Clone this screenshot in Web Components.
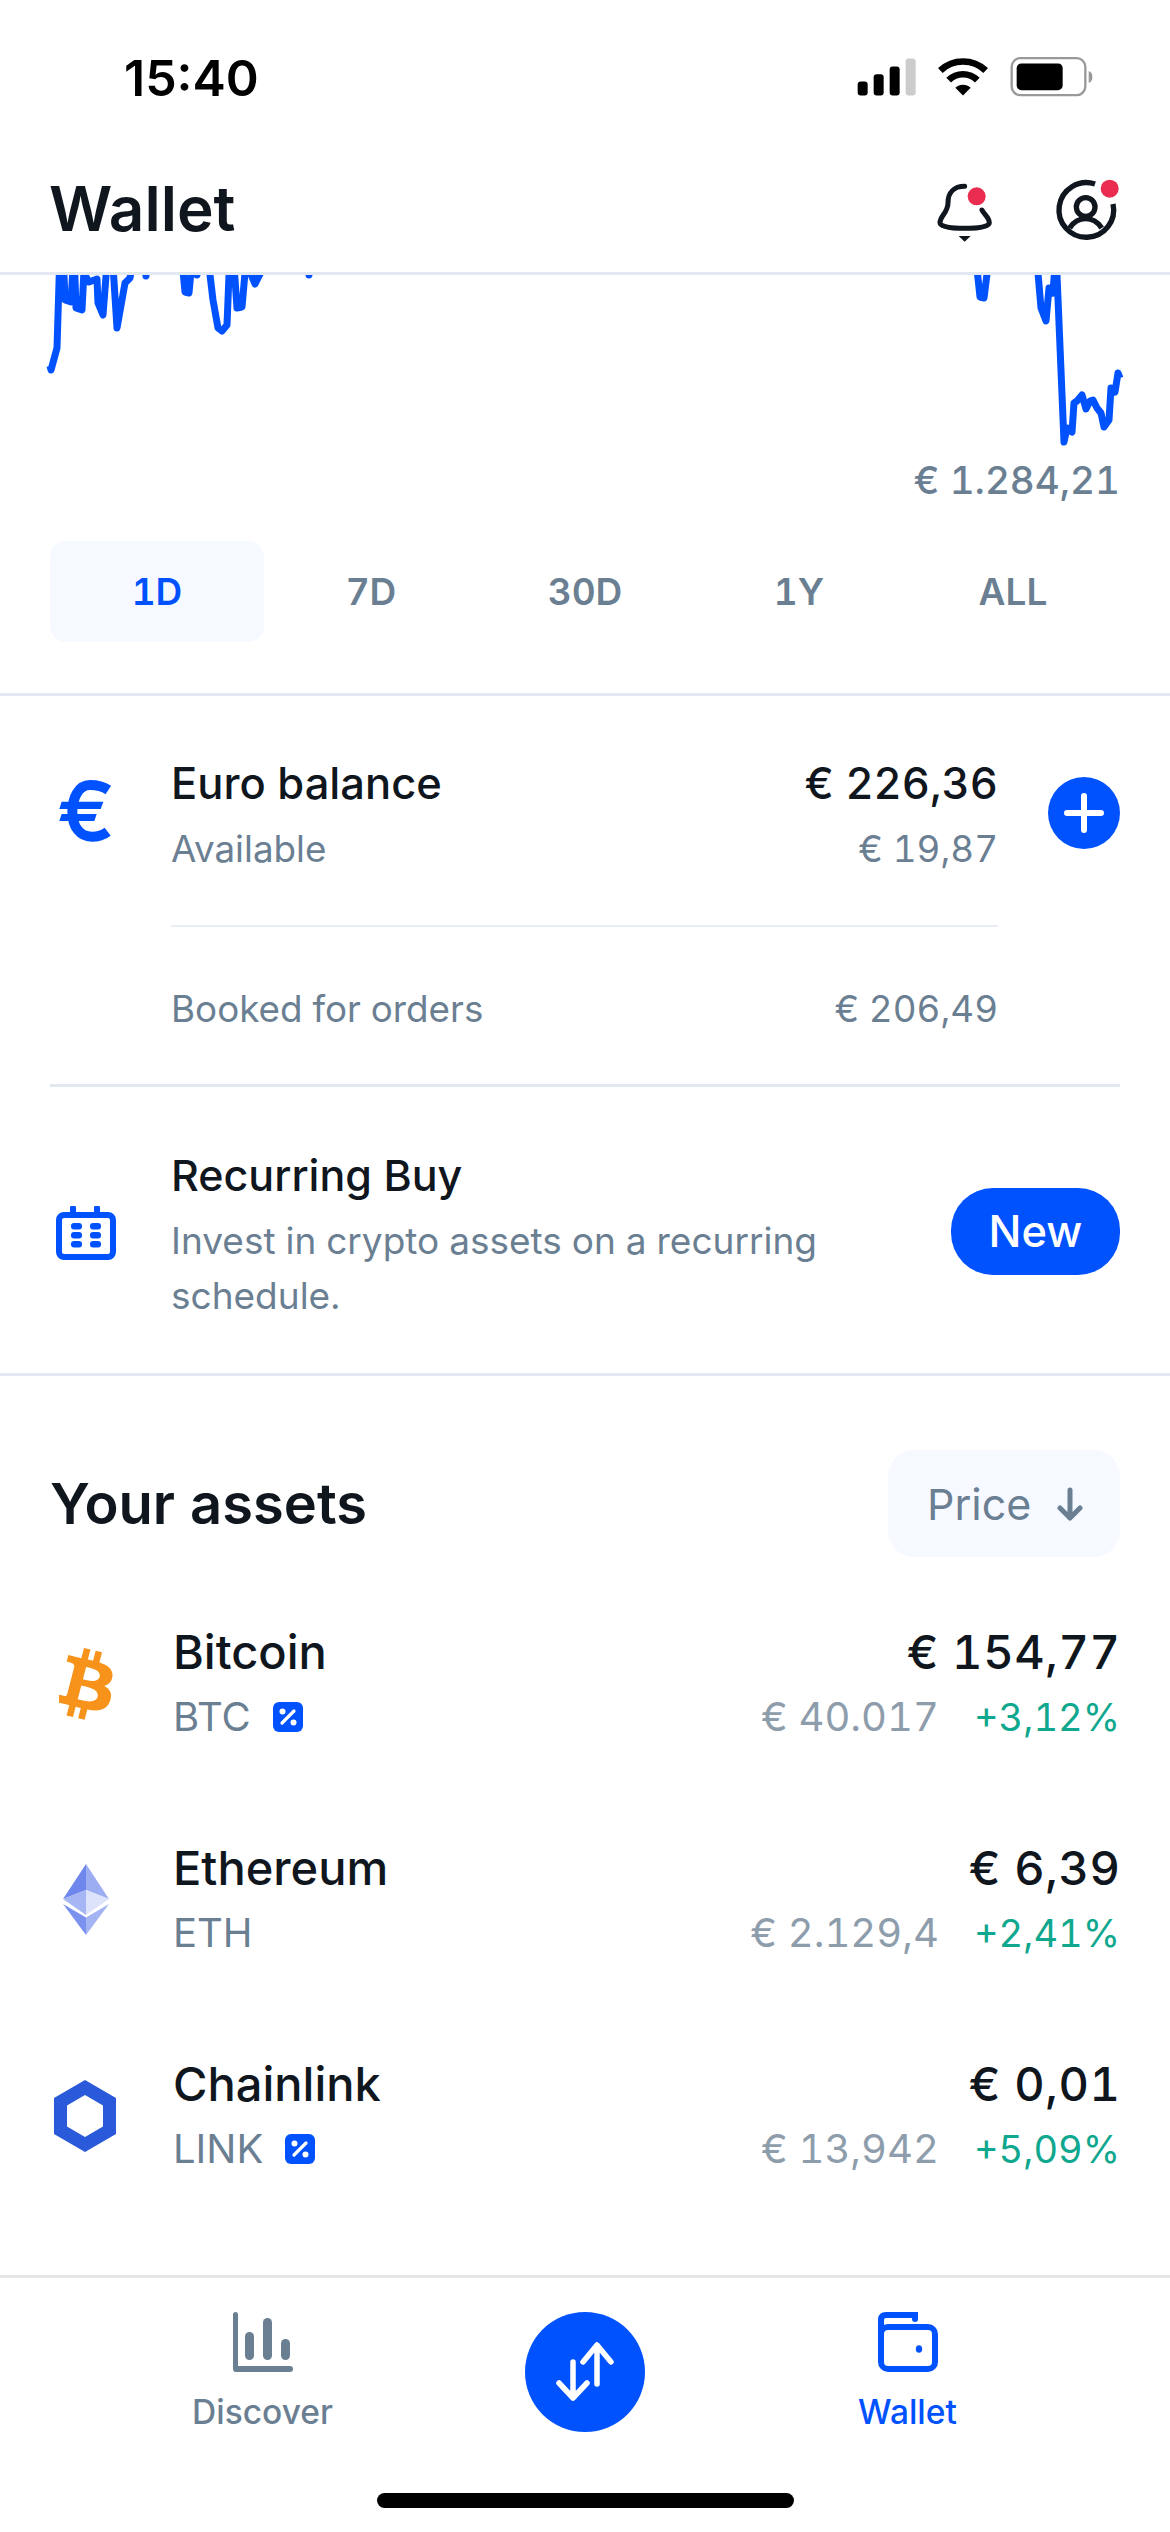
<!DOCTYPE html>
<html lang="en">
<head>
<meta charset="utf-8">
<title>Wallet</title>
<style>
  html, body { margin: 0; background: #fff; }
  body { font-family: Inter, "Liberation Sans", sans-serif; font-variant-numeric: tabular-nums; color: #10161d; }
</style>
</head>
<body>
<wallet-app>
  <status-bar slot="status" time="15:40"></status-bar>
  <wallet-header title="Wallet" slot="status"></wallet-header>
  <price-chart value="€ 1.284,21"></price-chart>
  <range-tabs active="1D" options="1D,7D,30D,1Y,ALL"></range-tabs>
  <euro-balance></euro-balance>
  <recurring-promo></recurring-promo>
  <assets-list></assets-list>
  <tab-bar slot="footer"></tab-bar>
</wallet-app>

<script>
const BLUE = '#0052ff';
const GRAY = '#6b7f93';

class WalletApp extends HTMLElement {
  constructor() {
    super();
    this.attachShadow({ mode: 'open' });
    this.shadowRoot.innerHTML = `
      <style>
        :host { display: flex; flex-direction: column; width: 1170px; height: 2532px; overflow: hidden; background: #fff; }
        main { flex: 1; min-height: 0; overflow: hidden; }
      </style>
      <slot name="status"></slot>
      <main><slot></slot></main>
      <slot name="footer"></slot>
    `;
  }
}

class StatusBar extends HTMLElement {
  connectedCallback() {
    this.attachShadow({ mode: 'open' });
    this.shadowRoot.innerHTML = `
      <style>
        :host { display: flex; align-items: flex-start; justify-content: space-between; height: 130px; box-sizing: border-box; padding: 0 75.5px 0 124px; }
        .time { font-size: 50px; font-weight: 600; font-variant-numeric: normal; line-height: 60px; margin-top: 48px; color: #000; }
        svg { display: block; width: 240px; height: 42px; margin-top: 56px; }
      </style>
      <span class="time">${this.getAttribute('time')}</span>
      <svg viewBox="40 50 720 125">
        <rect x="48" y="126" width="30" height="42" rx="9"/>
        <rect x="96" y="104" width="30" height="64" rx="9"/>
        <rect x="144" y="81" width="30" height="87" rx="9"/>
        <rect x="192" y="57" width="30" height="111" rx="9" fill="#ccc"/>
        <path d="M296 93A99 99 0 0 1 432 93M321 122A61 61 0 0 1 407 122" fill="none" stroke="#000" stroke-width="20"/>
        <path d="M364 168L341 145A33 33 0 0 1 387 145Z"/>
        <rect x="510" y="56" width="221" height="111" rx="26" fill="none" stroke="#999" stroke-width="7"/>
        <rect x="525" y="72" width="138" height="80" rx="14"/>
        <path d="M741 95C750 97 752 104 752 112C752 120 750 128 741 130Z" fill="#999"/>
      </svg>
    `;
  }
}

class WalletHeader extends HTMLElement {
  connectedCallback() {
    this.attachShadow({ mode: 'open' });
    this.shadowRoot.innerHTML = `
      <style>
        :host { display: flex; align-items: center; height: 145px; box-sizing: border-box; padding: 0 50px 0 49px; border-bottom: 3px solid #e1e8f0; background: #fff; }
        h1 { flex: 1; margin: 16px 0 0; font-size: 62px; font-weight: 600; line-height: 76px; color: #10161d; }
        svg { display: block; flex: none; }
        .bell { width: 60px; height: 63.3px; margin-right: 59px; margin-top: 23px; }
        .user { width: 66.7px; height: 66.7px; margin-top: 17px; }
      </style>
      <h1>${this.getAttribute('title')}</h1>
      <svg class="bell" viewBox="280 410 180 190" fill="none" stroke="#10161d" stroke-width="15" stroke-linecap="round">
        <path d="M372 426C340 426 322 445 322 475C322 505 298 515 298 535C298 548 335 552 372 552C410 552 446 548 446 535C446 520 430 510 424 497"/>
        <path d="M354 575H390L372 592Z" fill="#10161d" stroke="none"/>
        <circle cx="408" cy="456" r="27" fill="#e92c50" stroke="none"/>
      </svg>
      <svg class="user" viewBox="640 400 200 200" fill="none" stroke="#10161d" stroke-width="16" stroke-linecap="butt">
        <path d="M766 424A82 82 0 1 0 820 484"/>
        <circle cx="738" cy="493" r="28"/>
        <path d="M690 556Q708 528 738 528Q768 528 786 556"/>
        <circle cx="810" cy="438" r="27" fill="#e92c50" stroke="none"/>
      </svg>
    `;
  }
}

class PriceChart extends HTMLElement {
  connectedCallback() {
    this.attachShadow({ mode: 'open' });
    const points = [
      '50,366 51,370 57,348 60,250 63,250 65,300 71,302 74,250 76,308 82,310 85,250 85,275 89,282 97,279 98,303 103,315 108,250 112,250 117,328 125,283 130,278 135,250',
      '144,250 146,276 148,250',
      '181,250 185,292 189,293 193,250',
      '195,250 197,275 199,250',
      '207,250 213,300 218,328 222,331 227,325 230,250 233,250 237,308 242,307 247,250 250,272 255,284 261,272 268,250',
      '307,250 309,275 311,250',
      '975,250 980,297 984,298 990,250',
      '1036,250 1041,308 1046,321 1049,288 1053,293 1056,250 1057,275 1064,442 1067,428 1072,432 1074,403 1077,401 1082,395 1086,409 1090,401 1093,400 1097,408 1101,413 1104,427 1109,420 1111,388 1115,392 1118,373 1120,378'
    ];
    this.shadowRoot.innerHTML = `
      <style>
        :host { display: block; }
        svg { display: block; width: 1170px; height: 171px; }
        .value { text-align: right; padding-right: 50px; font-size: 38.5px; font-weight: 500; line-height: 48px; margin-top: 9.5px; color: ${GRAY}; }
      </style>
      <svg viewBox="0 275 1170 171" fill="none" stroke="${BLUE}" stroke-width="7" stroke-linejoin="round">
        ${points.map(p => `<polyline points="${p}"/>`).join('')}
      </svg>
      <div class="value">${this.getAttribute('value')}</div>
    `;
  }
}

class RangeTabs extends HTMLElement {
  connectedCallback() {
    this.attachShadow({ mode: 'open' });
    const active = this.getAttribute('active');
    const options = this.getAttribute('options').split(',');
    this.shadowRoot.innerHTML = `
      <style>
        :host { display: grid; grid-template-columns: repeat(5, 1fr); padding: 37.5px 50px 50.5px; border-bottom: 3px solid #e1e8f0; }
        div { height: 101px; display: flex; align-items: center; justify-content: center; font-size: 37px; font-weight: 600; color: ${GRAY}; border-radius: 16px; }
        .on { background: #f6f9ff; color: ${BLUE}; }
      </style>
      ${options.map(o => `<div class="${o === active ? 'on' : ''}">${o}</div>`).join('')}
    `;
  }
}

class EuroBalance extends HTMLElement {
  connectedCallback() {
    this.attachShadow({ mode: 'open' });
    this.shadowRoot.innerHTML = `
      <style>
        :host { display: block; padding: 0 50px; }
        .wrap { display: flex; border-bottom: 3px solid #e1e8f0; height: 391px; box-sizing: border-box; }
        .icon { flex: none; width: 121px; margin-top: 74px; }
        .icon svg { display: block; width: 90px; height: 90px; margin-left: -10px; }
        .body { flex: 1; min-width: 0; }
        .top { height: 231.5px; box-sizing: border-box; padding-top: 56.5px; border-bottom: 2px solid #e7edf3; }
        .row { display: flex; justify-content: space-between; }
        .main { font-size: 43.5px; font-weight: 500; line-height: 62px; }
        .sub { font-size: 36.8px; line-height: 44px; color: ${GRAY}; }
        .top .sub { margin-top: 13px; }
        .booked { margin-top: 60px; }
        .plus { flex: none; width: 122px; display: flex; justify-content: flex-end; padding-top: 81px; box-sizing: border-box; }
        .plus svg { display: block; width: 72px; height: 72px; }
      </style>
      <div class="wrap">
        <div class="icon">
          <svg viewBox="0 0 270 270" fill="none" stroke="${BLUE}">
            <path d="M205 60C190 50 170 45 150 45C115 45 97 85 97 125C97 170 120 200 155 200C175 200 190 195 203 185" stroke-width="30"/>
            <path d="M65 95H190L182 117H58ZM65 132H170L163 153H58Z" fill="${BLUE}" stroke="none"/>
          </svg>
        </div>
        <div class="body">
          <div class="top">
            <div class="row main"><span>Euro balance</span><span>€ 226,36</span></div>
            <div class="row sub"><span>Available</span><span>€ 19,87</span></div>
          </div>
          <div class="row sub booked"><span>Booked for orders</span><span>€ 206,49</span></div>
        </div>
        <div class="plus">
          <svg viewBox="0 0 72 72">
            <circle cx="36" cy="36" r="36" fill="${BLUE}"/>
            <path d="M36 19V53M19 36H53" stroke="#fff" stroke-width="6" stroke-linecap="round"/>
          </svg>
        </div>
      </div>
    `;
  }
}

class RecurringPromo extends HTMLElement {
  connectedCallback() {
    this.attachShadow({ mode: 'open' });
    this.shadowRoot.innerHTML = `
      <style>
        :host { display: flex; align-items: flex-start; padding: 0 50px; height: 289px; box-sizing: border-box; border-bottom: 3px solid #e1e8f0; }
        svg { flex: none; display: block; width: 60px; height: 54px; margin: 119px 55px 0 6px; }
        .text { flex: 1; padding-top: 60px; min-width: 0; }
        .title { font-size: 43px; font-weight: 500; line-height: 56px; }
        .desc { width: 670px; font-size: 37px; line-height: 55px; color: ${GRAY}; margin-top: 10.5px; }
        button { flex: none; all: unset; width: 169px; height: 87px; margin-top: 101px; border-radius: 42px; background: ${BLUE}; color: #fff; font-size: 43.5px; font-weight: 500; text-align: center; line-height: 87px; }
      </style>
      <svg viewBox="0 0 60 54">
        <rect x="3" y="9" width="54" height="42" rx="5" fill="none" stroke="${BLUE}" stroke-width="6"/>
        <path d="M17 2V8M41 2V8" stroke="${BLUE}" stroke-width="6" stroke-linecap="round"/>
        <g fill="${BLUE}">
          <rect x="15" y="17" width="11" height="6.5" rx="3"/><rect x="34" y="17" width="11" height="6.5" rx="3"/>
          <rect x="15" y="26" width="11" height="6.5" rx="3"/><rect x="34" y="26" width="11" height="6.5" rx="3"/>
          <rect x="15" y="35" width="11" height="6.5" rx="3"/><rect x="34" y="35" width="11" height="6.5" rx="3"/>
        </g>
      </svg>
      <div class="text">
        <div class="title">Recurring Buy</div>
        <div class="desc">Invest in crypto assets on a recurring schedule.</div>
      </div>
      <button>New</button>
    `;
  }
}

const COIN_ICONS = {
  BTC: `<svg width="56" height="72" viewBox="8.9 6 15 20" preserveAspectRatio="none" style="margin-left:9px"><path fill="#f7931a" d="M23.189 14.02c.314-2.096-1.283-3.223-3.465-3.975l.708-2.84-1.728-.43-.69 2.765c-.454-.114-.92-.22-1.385-.326l.695-2.783L15.596 6l-.708 2.839c-.376-.086-.746-.17-1.104-.26l.002-.009-2.384-.595-.46 1.846s1.283.294 1.256.312c.7.175.826.638.805 1.006l-.806 3.235c.048.012.11.03.18.057l-.183-.045-1.13 4.532c-.086.212-.303.531-.793.41.018.025-1.256-.313-1.256-.313l-.858 1.978 2.25.561c.418.105.828.215 1.231.318l-.715 2.872 1.727.43.708-2.84c.472.127.93.245 1.378.357l-.706 2.828 1.728.43.715-2.866c2.948.558 5.164.333 6.097-2.333.752-2.146-.037-3.385-1.588-4.192 1.13-.26 1.98-1.003 2.207-2.538zm-3.95 5.538c-.533 2.147-4.148.986-5.32.695l.95-3.805c1.172.293 4.929.872 4.37 3.11zm.535-5.569c-.487 1.953-3.495.96-4.47.717l.86-3.45c.975.243 4.118.696 3.61 2.733z"/></svg>`,
  ETH: `<svg width="46" height="71" viewBox="0 0 46 71" style="margin-left:13px">
    <path d="M23 0L0 35L23 26Z" fill="#6f87ec"/><path d="M23 0L46 35L23 26Z" fill="#9dadf1"/>
    <path d="M0 35L23 26V51Z" fill="#a6b5f3"/><path d="M46 35L23 26V51Z" fill="#dde3fb"/>
    <path d="M0 40L23 53.5V71Z" fill="#7a91ee"/><path d="M46 40L23 53.5V71Z" fill="#a4b3f2"/>
  </svg>`,
  LINK: `<svg width="62" height="72" viewBox="0 0 62 72" style="margin-left:4px"><path fill-rule="evenodd" fill="#2a5ada" d="M31 0L62 18V54L31 72L0 54V18ZM31 15L13 25.5V46.5L31 57L49 46.5V25.5Z"/></svg>`
};

class AssetRow extends HTMLElement {
  connectedCallback() {
    this.attachShadow({ mode: 'open' });
    const a = n => this.getAttribute(n);
    const badge = this.hasAttribute('badge') ? `
      <svg class="badge" viewBox="0 0 30 30">
        <rect width="30" height="30" rx="6" fill="${BLUE}"/>
        <path d="M9 21L21 9" stroke="#fff" stroke-width="3.2" stroke-linecap="round"/>
        <circle cx="9.5" cy="9.5" r="3" fill="#fff"/><circle cx="20.5" cy="20.5" r="3" fill="#fff"/>
      </svg>` : '';
    this.shadowRoot.innerHTML = `
      <style>
        :host { display: flex; align-items: center; height: 216px; }
        .icon { flex: none; width: 123px; }
        .icon svg { display: block; }
        .left { flex: 1; }
        .name { font-size: 47px; font-weight: 500; line-height: 64px; }
        .sym { display: flex; align-items: center; gap: 22px; font-size: 40px; line-height: 60px; color: ${GRAY}; margin-top: 3px; }
        .badge { display: block; width: 30px; height: 30px; }
        .right { text-align: right; }
        .value { font-size: 47px; font-weight: 500; line-height: 64px; letter-spacing: 0.6px; margin-right: -0.6px; }
        .meta { display: flex; justify-content: flex-end; align-items: baseline; gap: 35px; line-height: 60px; margin-top: 3px; }
        .price { color: #8e9dac; font-size: 40px; }
        .chg { color: #0fa78d; font-size: 38px; }
      </style>
      <div class="icon">${COIN_ICONS[a('symbol')]}</div>
      <div class="left">
        <div class="name">${a('name')}</div>
        <div class="sym"><span>${a('symbol')}</span>${badge}</div>
      </div>
      <div class="right">
        <div class="value">${a('value')}</div>
        <div class="meta"><span class="price">${a('price')}</span><span class="chg">${a('change')}</span></div>
      </div>
    `;
  }
}

class AssetsList extends HTMLElement {
  connectedCallback() {
    this.attachShadow({ mode: 'open' });
    this.shadowRoot.innerHTML = `
      <style>
        :host { display: block; padding: 74px 50px 0; }
        .head { display: flex; align-items: center; justify-content: space-between; margin-bottom: 18px; }
        h2 { margin: 0; font-size: 56px; font-weight: 600; line-height: 108px; }
        .sort { display: flex; align-items: center; justify-content: space-between; box-sizing: border-box; width: 232px; height: 107px; padding: 0 36px 0 39px; border-radius: 26px; background: #f6f9ff; color: ${GRAY}; font-size: 43px; }
        .sort svg { display: block; width: 28px; height: 34px; }
      </style>
      <div class="head">
        <h2>Your assets</h2>
        <div class="sort">Price
          <svg viewBox="0 0 28 34" fill="none" stroke="${GRAY}" stroke-width="5" stroke-linecap="round" stroke-linejoin="round"><path d="M14 3V31M4 21L14 31L24 21"/></svg>
        </div>
      </div>
      <asset-row name="Bitcoin" symbol="BTC" badge value="€ 154,77" price="€ 40.017" change="+3,12%"></asset-row>
      <asset-row name="Ethereum" symbol="ETH" value="€ 6,39" price="€ 2.129,4" change="+2,41%"></asset-row>
      <asset-row name="Chainlink" symbol="LINK" badge value="€ 0,01" price="€ 13,942" change="+5,09%"></asset-row>
    `;
  }
}

class TabBar extends HTMLElement {
  connectedCallback() {
    this.attachShadow({ mode: 'open' });
    this.shadowRoot.innerHTML = `
      <style>
        :host { display: block; position: relative; height: 257px; box-sizing: border-box; border-top: 3px solid #e6e6e6; background: #fff; }
        nav { display: grid; grid-template-columns: 1fr 120px 1fr; padding-top: 34px; }
        .item { display: flex; flex-direction: column; align-items: center; font-size: 33.5px; line-height: 44px; color: ${GRAY}; font-weight: 500; gap: 18px; }
        .item svg { display: block; width: 60px; height: 60px; }
        .item.on { color: ${BLUE}; }
        .trade { width: 120px; height: 120px; display: block; }
        .home { position: absolute; left: 377px; top: 215px; width: 417px; height: 15px; border-radius: 8px; background: #000; }
      </style>
      <nav>
        <div class="item">
          <svg viewBox="0 0 60 60" fill="${GRAY}">
            <path d="M0 2.5A2.5 2.5 0 0 1 5 2.5V54H57A3 3 0 0 1 57 60H3A3 3 0 0 1 0 57Z"/>
            <rect x="12" y="20" width="9" height="28" rx="4.5"/><rect x="30" y="6" width="9" height="42" rx="4.5"/><rect x="48" y="27" width="9" height="21" rx="4.5"/>
          </svg>
          <span>Discover</span>
        </div>
        <svg class="trade" viewBox="0 0 120 120">
          <circle cx="60" cy="60" r="60" fill="${BLUE}"/>
          <path d="M72 72V34M58 50L72 33L86 50M48 50V86M34 71L48 86L62 71" fill="none" stroke="#fff" stroke-width="5.5" stroke-linecap="round" stroke-linejoin="round"/>
        </svg>
        <div class="item on">
          <svg viewBox="0 0 60 60" fill="none" stroke="${BLUE}" stroke-width="6" stroke-linecap="round">
            <rect x="3" y="15" width="54" height="42" rx="7"/>
            <path d="M3 22V8Q3 3 8 3H37V7"/>
            <ellipse cx="41" cy="37" rx="3.2" ry="3.8" fill="${BLUE}" stroke="none"/>
          </svg>
          <span>Wallet</span>
        </div>
      </nav>
      <div class="home"></div>
    `;
  }
}

customElements.define('wallet-app', WalletApp);
customElements.define('status-bar', StatusBar);
customElements.define('wallet-header', WalletHeader);
customElements.define('price-chart', PriceChart);
customElements.define('range-tabs', RangeTabs);
customElements.define('euro-balance', EuroBalance);
customElements.define('recurring-promo', RecurringPromo);
customElements.define('asset-row', AssetRow);
customElements.define('assets-list', AssetsList);
customElements.define('tab-bar', TabBar);
</script>
</body>
</html>
